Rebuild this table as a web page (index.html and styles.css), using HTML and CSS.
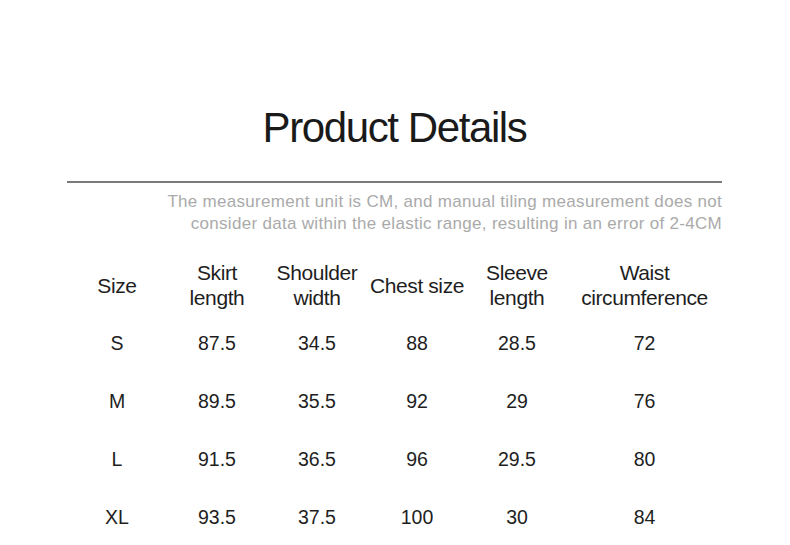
FILE: index.html
```html
<!DOCTYPE html>
<html lang="en">
<head>
<meta charset="utf-8">
<title>Product Details</title>
<link rel="stylesheet" href="styles.css">
</head>
<body>
<main class="page">
  <h1 class="title">Product Details</h1>
  <hr class="divider">
  <p class="note">The measurement unit is CM, and manual tiling measurement does not<br>consider data within the elastic range, resulting in an error of 2-4CM</p>
  <div class="size-table">
    <div class="cell head">Size</div>
    <div class="cell head">Skirt<br>length</div>
    <div class="cell head">Shoulder<br>width</div>
    <div class="cell head">Chest size</div>
    <div class="cell head">Sleeve<br>length</div>
    <div class="cell head">Waist<br>circumference</div>

    <div class="cell">S</div><div class="cell">87.5</div><div class="cell">34.5</div><div class="cell">88</div><div class="cell">28.5</div><div class="cell">72</div>
    <div class="cell">M</div><div class="cell">89.5</div><div class="cell">35.5</div><div class="cell">92</div><div class="cell">29</div><div class="cell">76</div>
    <div class="cell">L</div><div class="cell">91.5</div><div class="cell">36.5</div><div class="cell">96</div><div class="cell">29.5</div><div class="cell">80</div>
    <div class="cell">XL</div><div class="cell">93.5</div><div class="cell">37.5</div><div class="cell">100</div><div class="cell">30</div><div class="cell">84</div>
  </div>
</main>
</body>
</html>
```
FILE: styles.css
```css
html, body {
  margin: 0;
  padding: 0;
  background: #ffffff;
}
body {
  font-family: "Liberation Sans", Arial, sans-serif;
  color: #1e1e1e;
}
.page {
  padding: 104px 68px 0 67px;
}
.title {
  margin: 0;
  font-size: 42px;
  line-height: 48px;
  font-weight: 400;
  text-align: center;
  letter-spacing: -1.4px;
  color: #1a1a1a;
}
.divider {
  margin: 29px 0 0;
  border: 0;
  height: 2px;
  background: #7a7a7a;
}
.note {
  margin: 8px 0 0;
  font-size: 17px;
  line-height: 22px;
  text-align: right;
  color: #aaaaaa;
  letter-spacing: 0.3px;
}
.size-table {
  margin-top: 25px;
  display: grid;
  grid-template-columns: 100px 100px 100px 100px 100px 1fr;
  grid-template-rows: 54px repeat(4, 58px);
}
.cell {
  display: flex;
  align-items: center;
  justify-content: center;
  text-align: center;
  font-size: 19.5px;
  line-height: 25px;
}
.cell.head {
  font-size: 21px;
  letter-spacing: -0.4px;
  align-items: flex-start;
  height: 50px;
  align-self: start;
}
.cell.head:first-child,
.cell.head:nth-child(4) {
  align-items: center;
}
```
